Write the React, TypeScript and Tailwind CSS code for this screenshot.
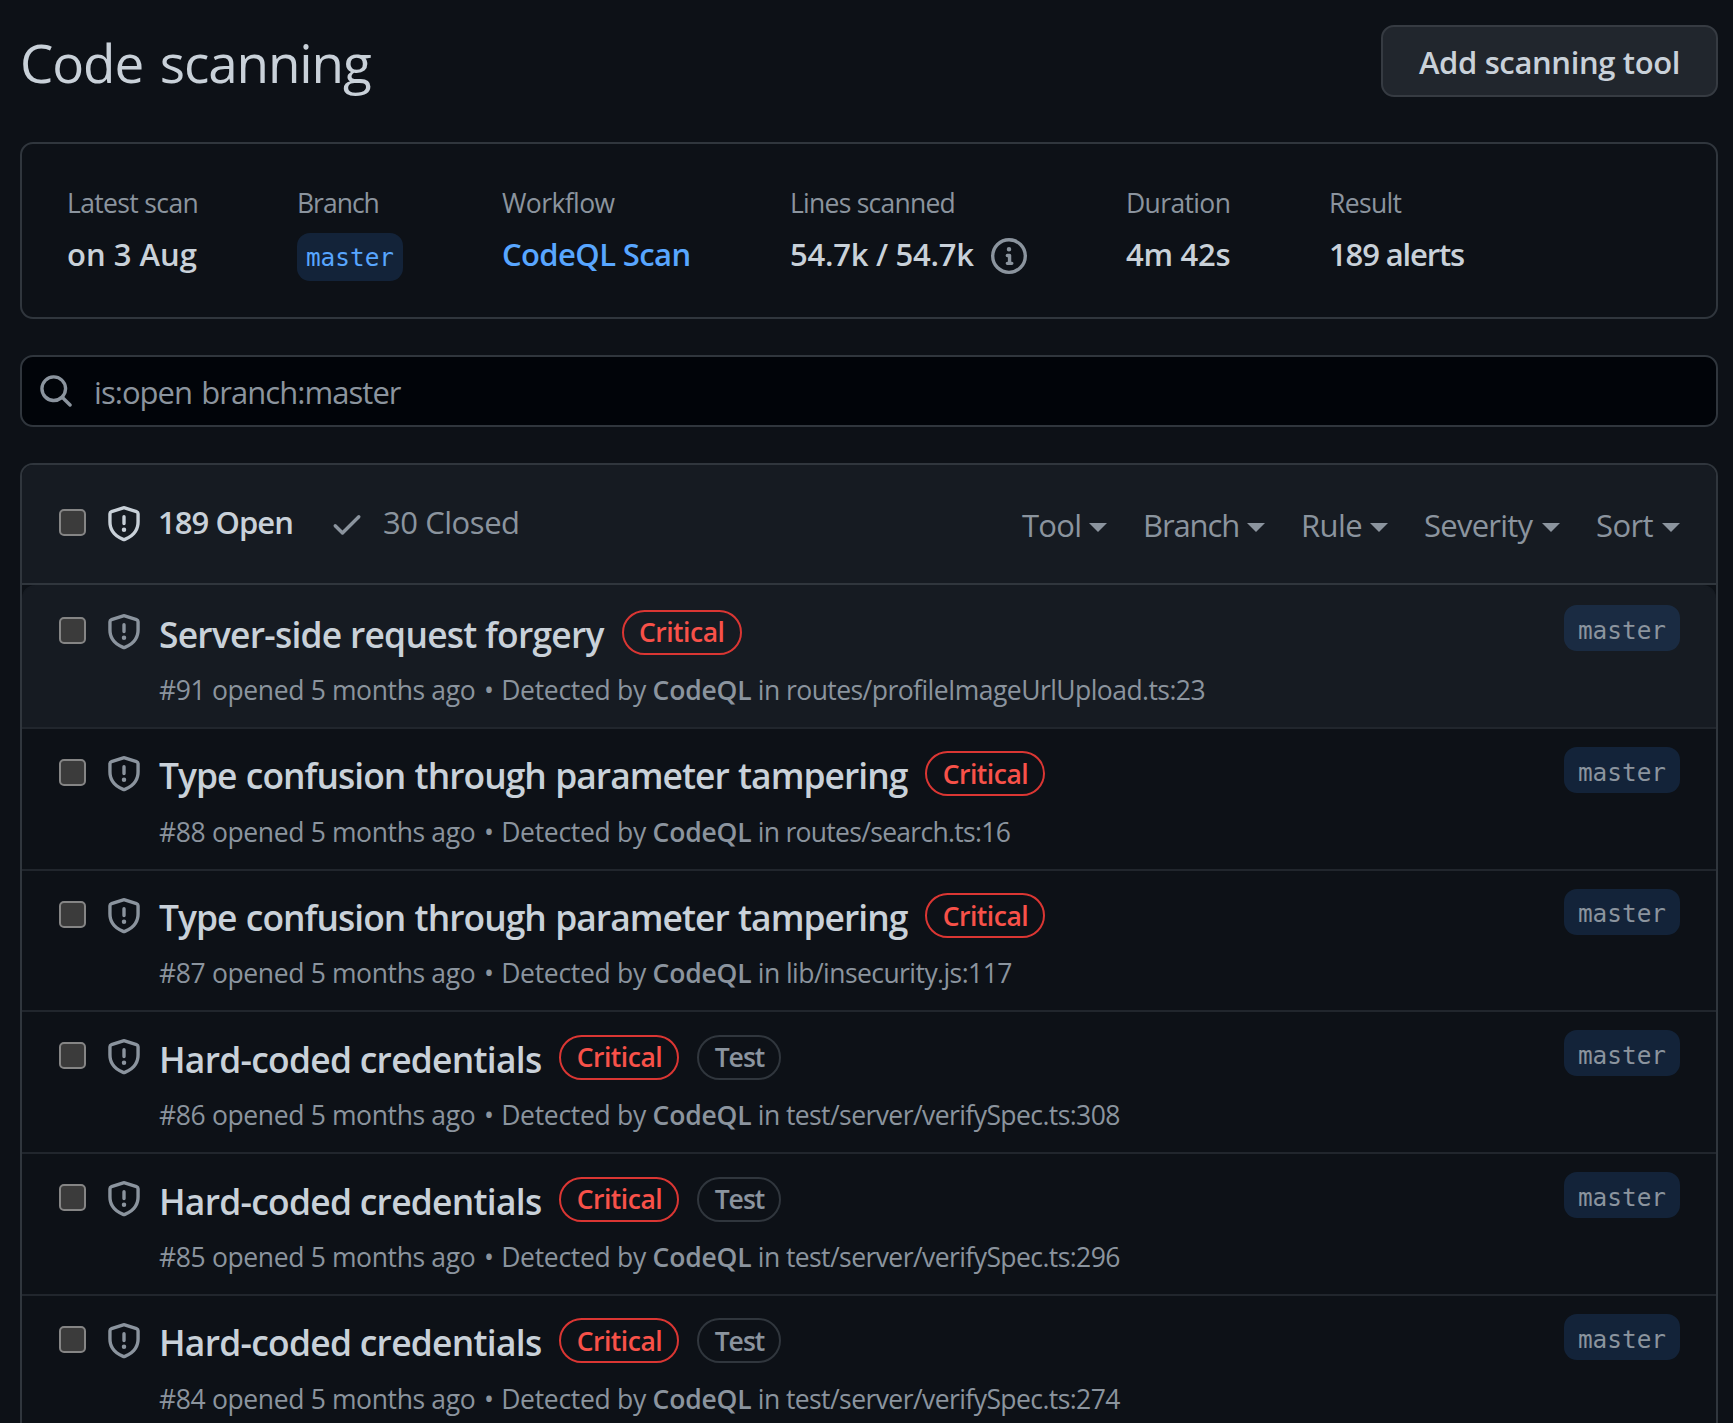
import type { ReactNode } from "react";

type IconProps = { d: string; className?: string };

function Octicon({ d, className = "" }: IconProps) {
  return (
    <svg viewBox="0 0 16 16" fill="currentColor" aria-hidden="true" className={`size-9 shrink-0 ${className}`}>
      <path d={d} />
    </svg>
  );
}

const INFO =
  "M0 8a8 8 0 1 1 16 0A8 8 0 0 1 0 8Zm8-6.5a6.5 6.5 0 1 0 0 13 6.5 6.5 0 0 0 0-13ZM6.5 7.75A.75.75 0 0 1 7.25 7h1a.75.75 0 0 1 .75.75v2.75h.25a.75.75 0 0 1 0 1.5h-2a.75.75 0 0 1 0-1.5h.25v-2h-.25a.75.75 0 0 1-.75-.75ZM8 6a1 1 0 1 1 0-2 1 1 0 0 1 0 2Z";
const SEARCH =
  "M10.68 11.74a6 6 0 0 1-7.922-8.982 6 6 0 0 1 8.982 7.922l3.04 3.04a.749.749 0 0 1-.326 1.275.749.749 0 0 1-.734-.215ZM11.5 7a4.499 4.499 0 1 0-8.997 0A4.499 4.499 0 0 0 11.5 7Z";
const CHECK =
  "M13.78 4.22a.75.75 0 0 1 0 1.06l-7.25 7.25a.75.75 0 0 1-1.06 0L2.22 9.28a.751.751 0 0 1 .018-1.042.751.751 0 0 1 1.042-.018L6 10.94l6.72-6.72a.75.75 0 0 1 1.06 0Z";
const SHIELD =
  "M7.467.133a1.748 1.748 0 0 1 1.066 0l5.25 1.68A1.75 1.75 0 0 1 15 3.48V7c0 1.566-.32 3.182-1.303 4.682-.983 1.498-2.585 2.813-5.032 3.855a1.697 1.697 0 0 1-1.33 0c-2.447-1.042-4.049-2.357-5.032-3.855C1.32 10.182 1 8.566 1 7V3.48a1.75 1.75 0 0 1 1.217-1.667Zm.61 1.429a.25.25 0 0 0-.153 0l-5.25 1.68a.25.25 0 0 0-.174.238V7c0 1.358.275 2.666 1.057 3.86.784 1.194 2.121 2.34 4.366 3.297a.196.196 0 0 0 .154 0c2.245-.956 3.582-2.104 4.366-3.298C13.225 9.666 13.5 8.36 13.5 7V3.48a.251.251 0 0 0-.174-.237l-5.25-1.68ZM8.75 4.75v3a.75.75 0 0 1-1.5 0v-3a.75.75 0 0 1 1.5 0ZM9 10.5a1 1 0 1 1-2 0 1 1 0 0 1 2 0Z";

function Checkbox({ className = "" }: { className?: string }) {
  return (
    <span
      role="checkbox"
      aria-checked="false"
      className={`block size-[27px] shrink-0 rounded-[5px] border-2 border-[#858585] bg-[#3b3b3b] ${className}`}
    />
  );
}

function Stat({ label, tracking, width, children }: { label: string; tracking: string; width: string; children: ReactNode }) {
  return (
    <div className={`shrink-0 whitespace-nowrap ${width}`}>
      <div className={`text-[26.5px] leading-10 text-[#8b949e] ${tracking}`}>{label}</div>
      <div className="mt-[7px] flex h-12 items-center text-[31px] leading-[48px] font-semibold">{children}</div>
    </div>
  );
}

const filters = [
  { label: "Tool", width: "w-[58px]", tracking: "tracking-[-0.7px]" },
  { label: "Branch", width: "w-[95px]", tracking: "tracking-[-1.1px]" },
  { label: "Rule", width: "w-[60px]", tracking: "tracking-[-0.6px]" },
  { label: "Severity", width: "w-[109px]", tracking: "tracking-[-0.75px]" },
  { label: "Sort", width: "w-[57px]", tracking: "tracking-[-0.6px]" },
];

const forgery = { title: "Server-side request forgery", tracking: "tracking-[-0.74px]" };
const confusion = { title: "Type confusion through parameter tampering", tracking: "tracking-[-0.95px] [word-spacing:1px]" };
const credentials = { title: "Hard-coded credentials", tracking: "tracking-[-0.72px]" };

const alerts = [
  { ...forgery, id: 91, path: "routes/profileImageUrlUpload.ts:23", pathTracking: "tracking-[-0.56px]", test: false },
  { ...confusion, id: 88, path: "routes/search.ts:16", pathTracking: "tracking-[-0.7px]", test: false },
  { ...confusion, id: 87, path: "lib/insecurity.js:117", pathTracking: "tracking-[-0.56px]", test: false },
  { ...credentials, id: 86, path: "test/server/verifySpec.ts:308", pathTracking: "tracking-[-0.58px]", test: true },
  { ...credentials, id: 85, path: "test/server/verifySpec.ts:296", pathTracking: "tracking-[-0.58px]", test: true },
  { ...credentials, id: 84, path: "test/server/verifySpec.ts:274", pathTracking: "tracking-[-0.58px]", test: true },
];

function AlertRow({ alert, first }: { alert: (typeof alerts)[number]; first: boolean }) {
  return (
    <li
      className={`flex h-[141.75px] shrink-0 items-start border-t-2 pr-9 pl-[37px] ${
        first ? "rounded-t-[13px] border-[#161b22] bg-[#161b22]" : "border-[#21262d]"
      }`}
    >
      <Checkbox className="mt-[30px]" />
      <Octicon d={SHIELD} className="mt-[27px] ml-[20px] text-[#8b949e]" />
      <div className="ml-[17px] grow whitespace-nowrap">
        <div className="mt-[22.6px] flex h-[45px] items-center">
          <h3 className={`pt-[3px] text-[35.4px] leading-[44px] font-semibold ${alert.tracking}`}>{alert.title}</h3>
          <span className="ml-[18px] flex h-[45px] w-[120px] items-center justify-center rounded-full border-2 border-[#da3633] pt-[2px] text-[26.5px] font-semibold tracking-[-0.49px] text-[#f85149]">
            Critical
          </span>
          {alert.test && (
            <span className="ml-[18px] flex h-[45px] w-[84px] items-center justify-center rounded-full border-2 border-[#30363d] pt-[2px] text-[26.5px] font-semibold tracking-[-1px] text-[#8b949e]">
              Test
            </span>
          )}
        </div>
        <p className="mt-[15.4px] text-[26.5px] leading-10 tracking-[-0.3px] text-[#8b949e]">
          <span className="tracking-[-0.36px]">#{alert.id} opened 5 months ago</span>
          <span className="mr-px ml-[2px]"> • </span>
          Detected by <span className="font-semibold tracking-[-0.17px]">CodeQL</span>
          <span className={alert.pathTracking}> in {alert.path}</span>
        </p>
      </div>
      <span className="mt-[18px] flex h-[46px] w-[116px] shrink-0 items-center justify-center rounded-[13px] bg-[#388bfd26] pt-[6px] font-['DejaVu_Sans_Mono',monospace] text-[24.4px] leading-none text-[#8b949e]">
        master
      </span>
    </li>
  );
}

export default function App() {
  return (
    <main className="flex h-[1423px] w-[1733px] flex-col overflow-hidden bg-[#0d1117] pt-[25px] pr-[15px] pl-5 font-['Open_Sans',sans-serif] text-[#c9d1d9]">
      <header className="flex h-[72px] shrink-0 items-center justify-between">
        <h1 className="pt-[4px] text-[53px] leading-[72px] font-normal tracking-[-1.1px] [word-spacing:4px]">Code scanning</h1>
        <button className="flex h-[72px] w-[337px] items-center justify-center rounded-[13px] border-2 border-[#363b42] bg-[#21262d] pt-[2px] text-[31px] font-semibold tracking-[-0.37px]">
          Add scanning tool
        </button>
      </header>

      <section className="mt-[45px] flex h-[177px] shrink-0 rounded-[13px] border-2 border-[#30363d] pt-[39px] pl-[45px]">
        <Stat label="Latest scan" tracking="tracking-[-0.64px]" width="w-[230px]">on 3 Aug</Stat>
        <Stat label="Branch" tracking="tracking-[-1px]" width="w-[205px]">
          <span className="mt-[6px] flex h-12 w-[106px] items-center justify-center rounded-[13px] bg-[#388bfd26] pt-[2px] font-['DejaVu_Sans_Mono',monospace] text-[24.4px] leading-none font-normal text-[#58a6ff]">
            master
          </span>
        </Stat>
        <Stat label="Workflow" tracking="tracking-[-0.6px]" width="w-[288px]">
          <a className="tracking-[-0.6px] text-[#58a6ff]">CodeQL Scan</a>
        </Stat>
        <Stat label="Lines scanned" tracking="tracking-[-0.75px]" width="w-[336px]">
          <span className="w-[201px] tracking-[-0.25px]">54.7k / 54.7k</span>
          <Octicon d={INFO} className="mt-[4px] text-[#8b949e]" />
        </Stat>
        <Stat label="Duration" tracking="tracking-[-0.64px]" width="w-[203px]">
          <span className="tracking-[-0.25px]">4m 42s</span>
        </Stat>
        <Stat label="Result" tracking="tracking-[-0.64px]" width="w-[140px]">
          <span className="tracking-[-1.15px]">189 alerts</span>
        </Stat>
      </section>

      <div className="mt-9 flex h-[72px] shrink-0 items-center rounded-[13px] border-2 border-[#30363d] bg-[#010409] pl-4 text-[#8b949e]">
        <Octicon d={SEARCH} />
        <span className="ml-[20px] pt-[2px] text-[31px] leading-[48px] tracking-[-0.95px] [word-spacing:2px]">is:open branch:master</span>
      </div>

      <section className="mt-9 flex h-[1000px] shrink-0 flex-col rounded-t-[13px] border-2 border-b-0 border-[#30363d]">
        <div className="flex h-[120px] shrink-0 items-center rounded-t-[11px] border-b-2 border-[#30363d] bg-[#161b22] pr-9 pl-[37px] text-[31px] whitespace-nowrap text-[#8b949e]">
          <Checkbox className="mb-[3px]" />
          <Octicon d={SHIELD} className="ml-[20px] text-[#c9d1d9]" />
          <span className="mb-[4px] ml-[16px] w-[171px] font-semibold tracking-[-0.95px] text-[#c9d1d9]">189 Open</span>
          <Octicon d={CHECK} />
          <span className="mb-[4px] ml-[18px] tracking-[-0.45px]">30 Closed</span>
          <div className="mt-[3px] ml-auto flex gap-9">
            {filters.map((f) => (
              <span key={f.label} className="flex items-center gap-[9px]">
                <span className={`${f.width} ${f.tracking}`}>{f.label}</span>
                <svg viewBox="0 0 18 9" fill="currentColor" className="mt-[4px] h-[9px] w-[18px]">
                  <path d="M0 0h18L9 9z" />
                </svg>
              </span>
            ))}
          </div>
        </div>
        <ul className="flex flex-col">
          {alerts.map((a, i) => (
            <AlertRow key={a.id} alert={a} first={i === 0} />
          ))}
        </ul>
      </section>
    </main>
  );
}
